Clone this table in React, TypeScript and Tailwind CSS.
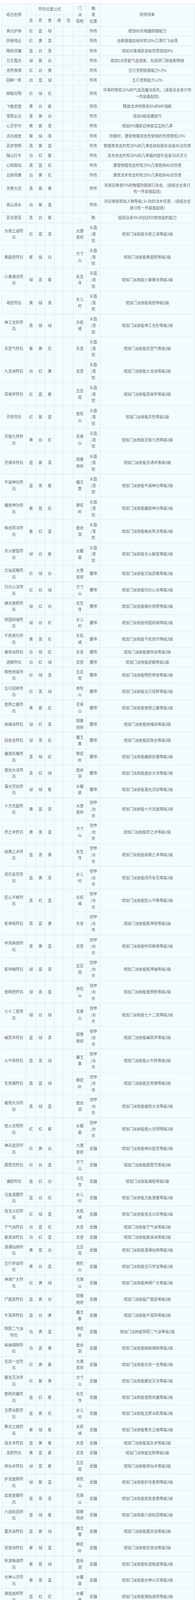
import React from "react"

const HK = "头盔\n/发\n钗"
const KJ = "铠甲\n/女\n衣"

// name, three stone colours, school, trigger slot, effect
type Row = [string, string, string, string, string]

const rows: Row[] = [
    ["真元护体", "红蓝绿", "-", "所有", "增加60点暗器防御能力"],
    ["风卷残云", "红黄黑", "-", "所有", "击倒鬼魂目标时有10%几率打飞出场"],
    ["降妖伏魔", "蓝白黑", "-", "所有", "增加对鬼魂系目标伤害增加8%"],
    ["万丈霞光", "绿紫白", "-", "所有", "增加5点恢复气血效果，包括师门技能和特技"],
    ["无所畏惧", "红白黄", "-", "所有", "五行克制抵御能力+2%"],
    ["回眸一笑", "白蓝绿", "-", "所有", "五行克制能力+2%"],
    ["柳暗花明", "红绿红", "-", "所有", "中毒时降低15%的气血及魔法损失。(该组合全身只有\n一件装备起效)"],
    ["飞檐走壁", "黄白紫", "-", "所有", "释放法术时降低8%的MP消耗"],
    ["雪照云光", "黑黄白", "-", "所有", "增加4级追捕技巧"],
    ["心灵手巧", "黄紫黑", "-", "所有", "增加8%捕获召唤兽宝宝的几率"],
    ["点石成金", "紫绿黑", "-", "所有", "防御时，遭受物理攻击所受到的伤害降低15%"],
    ["百步穿杨", "黑紫蓝", "-", "所有", "物理类攻击时有20%的几率给目标额外造成45点伤害"],
    ["隔山打牛", "白红紫", "-", "所有", "法术攻击时有20%的几率临时提升自身30点灵力"],
    ["心随我动", "黑蓝红", "", "所有", "遭受物理攻击时有25%几率抵挡40点伤害"],
    ["云随风舞", "白黄红", "", "所有", "遭受法术攻击时有20%几率抵挡40点伤害"],
    ["天降大任", "黑紫黄", "-", "所有", "无视召唤兽5%的物理防御进行攻击。(该组合全身只\n有一件装备起效)"],
    ["高山流水", "白紫蓝", "-", "所有", "对召唤兽增加人物等级/3+30的法术伤害。(该组合全\n身只有一件装备起效)"],
    ["百无禁忌", "黑白紫", "-", "靴", "提高自身4%对抗封印类技能的能力"],
    ["为官之道符石", "红蓝黑", "大唐官府", HK, ""],
    ["黄庭经符石", "紫绿白", "方寸山", HK, ""],
    ["小乘佛法符石", "绿黑紫", "化生寺", HK, ""],
    ["毒经符石", "黄绿黑", "女儿村", HK, ""],
    ["神工无形符石", "黑绿绿", "天机城", HK, ""],
    ["天罡气符石", "紫黄红", "天宫", HK, ""],
    ["九龙诀符石", "白红黄", "龙宫", HK, ""],
    ["周易学符石", "红蓝紫", "五庄观", HK, ""],
    ["灵性符石", "红紫蓝", "普陀山", HK, ""],
    ["灵猴九窍符石", "黄白红", "花果山", HK, ""],
    ["灵通术符石", "蓝紫黑", "阴曹地府", HK, ""],
    ["牛逼神功符石", "蓝黑紫", "魔王寨", HK, ""],
    ["魔兽神功符石", "紫蓝红", "狮驼岭", HK, ""],
    ["蛛丝阵法符石", "紫红蓝", "盘丝洞", HK, ""],
    ["天火献誓符石", "绿白紫", "女魃墓", HK, ""],
    ["文韬武略符石", "红绿白", "大唐官府", "腰带", ""],
    ["归元心法符石", "红白绿", "方寸山", "腰带", ""],
    ["佛光普照符石", "绿红白", "化生寺", "腰带", ""],
    ["倾国倾城符石", "绿白红", "女儿村", "腰带", ""],
    ["千机奇巧符石", "黄黑红", "天机城", "腰带", ""],
    ["傲世诀符石", "白绿红", "天宫", "腰带", ""],
    ["逆鳞符石", "白红绿", "龙宫", "腰带", ""],
    ["明性修身符石", "红绿黑", "五庄观", "腰带", ""],
    ["五行扭转符石", "红黑绿", "普陀山", "腰带", ""],
    ["金刚之躯符石", "黄紫红", "花果山", "腰带", ""],
    ["拘魂诀符石", "绿红黑", "阴曹地府", "腰带", ""],
    ["回身击符石", "绿黑红", "魔王寨", "腰带", ""],
    ["魔兽反噬符石", "黑绿红", "狮驼岭", "腰带", ""],
    ["盘丝大法符石", "黑红绿", "盘丝洞", "腰带", ""],
    ["藻光灵狱符石", "绿绿紫", "女魃墓", "腰带", ""],
    ["十方无敌符石", "黄蓝黑", "大唐官府", KJ, ""],
    ["符之术符石", "黄黑蓝", "方寸山", KJ, ""],
    ["歧黄之术符石", "蓝黑黄", "化生寺", KJ, ""],
    ["闭月羞花符石", "蓝黄黑", "女儿村", KJ, ""],
    ["匠心不移符石", "黑红蓝", "天机城", KJ, ""],
    ["乾坤塔符石", "黑蓝黄", "天宫", KJ, ""],
    ["呼风唤雨符石", "黑黄蓝", "龙宫", KJ, ""],
    ["乾坤袖符石", "绿蓝黑", "五庄观", KJ, ""],
    ["金刚经符石", "绿黑蓝", "普陀山", KJ, ""],
    ["七十二变符石", "绿白绿", "花果山", KJ, ""],
    ["幽冥术符石", "蓝绿黑", "阴曹地府", KJ, ""],
    ["火牛阵符石", "蓝黑绿", "魔王寨", KJ, ""],
    ["生死搏符石", "黑蓝绿", "狮驼岭", KJ, ""],
    ["催情大法符石", "黑绿蓝", "盘丝洞", KJ, ""],
    ["煌火无明符石", "红红紫", "女魃墓", KJ, ""],
    ["神兵鉴赏符石", "红黄白", "大唐官府", "武器", ""],
    ["霹雳咒符石", "红白蓝", "方寸山", "武器", ""],
    ["诵经符石", "蓝红白", "化生寺", "武器", ""],
    ["沉鱼落雁符石", "蓝白红", "女儿村", "武器", ""],
    ["攻玉以石符石", "红绿蓝", "天机城", "武器", ""],
    ["宁气诀符石", "白蓝红", "天宫", "武器", ""],
    ["破浪诀符石", "白红蓝", "龙宫", "武器", ""],
    ["潇湘仙雨符石", "黄蓝白", "五庄观", "武器", ""],
    ["五行学说符石", "黄白蓝", "普陀山", "武器", ""],
    ["神通广大符石", "红黄绿", "花果山", "武器", ""],
    ["尸腐恶符石", "蓝黄白", "阴曹地府", "武器", ""],
    ["牛虱阵符石", "蓝白黄", "魔王寨", "武器", ""],
    ["阴阳二气诀符石", "白黄蓝", "狮驼岭", "武器", ""],
    ["姊妹相随符石", "白蓝黄", "盘丝洞", "武器", ""],
    ["无双一击符石", "红黄紫", "大唐官府", "武器", ""],
    ["磐龙灭法符石", "红紫黄", "方寸山", "武器", ""],
    ["金刚伏魔符石", "蓝红紫", "化生寺", "武器", ""],
    ["玉质冰肌符石", "蓝紫红", "女儿村", "武器", ""],
    ["擎天之械符石", "紫绿紫", "天机城", "武器", ""],
    ["混天术符石", "蓝黄紫", "天宫", "武器", ""],
    ["龙附符石", "黄蓝紫", "龙宫", "武器", ""],
    ["修仙术符石", "绿蓝紫", "五庄观", "武器", ""],
    ["护法金刚符石", "绿紫蓝", "普陀山", "武器", ""],
    ["如意金箍符石", "蓝黑黑", "花果山", "武器", ""],
    ["六道轮回符石", "蓝绿紫", "阴曹地府", "武器", ""],
    ["震天诀符石", "蓝紫绿", "魔王寨", "武器", ""],
    ["狂兽诀符石", "紫绿蓝", "狮驼岭", "武器", ""],
    ["秋波暗送符石", "紫蓝绿", "盘丝洞", "武器", ""],
    ["化神以灵符石", "紫黑蓝", "女魃墓", "武器", ""],
    ["弹指成烬符石", "蓝红红", "女魃墓", "武器", ""],
    ["紫薇之术符石", "黄白黑", "大唐官府", "项链", ""],
    ["神道无念符石", "红黑白", "方寸山", "项链", ""],
    ["大慈大悲符石", "白红黑", "化生寺", "项链", ""],
    ["香飘兰麝符石", "白黑红", "女儿村", "项链", ""],
    ["探奥索隐符石", "蓝红黑", "天机城", "项链", ""],
    ["清明自在符石", "黑白红", "天宫", "项链", ""],
    ["龙腾符石", "黑红白", "龙宫", "项链", ""],
    ["混元道果符石", "绿白黑", "五庄观", "项链", ""],
    ["观音咒符石", "绿黑白", "普陀山", "项链", ""],
    ["齐天逞胜符石", "黑黄红", "花果山", "项链", ""],
]

const cell = "border border-[#d9eaef] px-[2px] py-[3.75px] text-center align-middle whitespace-pre"

function nameLines(s: string) {
    return s.length > 5 ? s.slice(0, 5) + "\n" + s.slice(5) : s
}

function schoolLines(s: string) {
    return s.length > 2 ? s.slice(0, 2) + "\n" + s.slice(2) : s
}

function effectText(name: string, effect: string) {
    if (effect) return effect
    return "增加门派技能" + name.replace(/符石$/, "") + "等级2级"
}

export default function App() {
    return (
        <div className="h-[4515px] w-[500px] overflow-hidden bg-white pt-[8px]">
            <table className="ml-[3px] w-[496px] table-fixed border-collapse bg-[#f2fbfd] text-[9.7px] leading-[16.67px] text-[#6b6b6b] font-['Noto_Sans_CJK_SC','Noto_Sans',sans-serif]">
                <colgroup>
                    <col className="w-[64px]" />
                    <col className="w-[24px]" />
                    <col className="w-[24px]" />
                    <col className="w-[24px]" />
                    <col className="w-[24px]" />
                    <col className="w-[24px]" />
                    <col className="w-[34.4px]" />
                    <col className="w-[35px]" />
                    <col />
                </colgroup>
                <thead>
                    <tr>
                        <th rowSpan={2} className={cell + " font-normal"}>组合名称</th>
                        <th colSpan={5} className={cell + " font-normal"}>符石位置公式</th>
                        <th rowSpan={2} className={cell + " font-normal"}>{"门\n派\n限制"}</th>
                        <th rowSpan={2} className={cell + " font-normal"}>{"触\n发\n位置"}</th>
                        <th rowSpan={2} className={cell + " font-normal"}>附带效果</th>
                    </tr>
                    <tr>
                        {["壹", "贰", "叁", "肆", "伍"].map((t) => (
                            <th key={t} className={cell + " font-normal"}>{t}</th>
                        ))}
                    </tr>
                </thead>
                <tbody>
                    {rows.map(([name, colors, school, slot, effect]) => (
                        <tr key={name}>
                            <td className={cell}>{nameLines(name)}</td>
                            <td className={cell}>{colors[0]}</td>
                            <td className={cell}>{colors[1]}</td>
                            <td className={cell}>{colors[2]}</td>
                            <td className={cell}></td>
                            <td className={cell}></td>
                            <td className={cell}>{schoolLines(school)}</td>
                            <td className={cell}>{slot}</td>
                            <td className={cell}>{effectText(name, effect)}</td>
                        </tr>
                    ))}
                </tbody>
            </table>
        </div>
    )
}
